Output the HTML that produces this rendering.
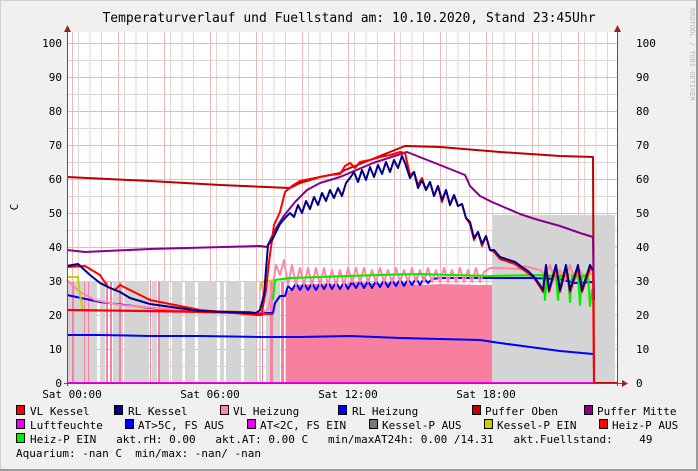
<!DOCTYPE html>
<html><head><meta charset="utf-8"><style>
body{margin:0;background:#f0f0f0;width:698px;height:471px;overflow:hidden}
svg{display:block}
text{font-family:"DejaVu Sans Mono","Liberation Mono",monospace}
</style></head><body>
<svg width="698" height="471" viewBox="0 0 698 471" xmlns="http://www.w3.org/2000/svg">
<rect x="0" y="0" width="698" height="471" fill="#f0f0f0"/>
<rect x="0.5" y="0.5" width="697" height="470" fill="none" stroke="#cfcfcf"/>
<line x1="0" y1="470" x2="698" y2="470" stroke="#9a9a9a" stroke-width="2"/>
<line x1="697" y1="0" x2="697" y2="471" stroke="#9a9a9a" stroke-width="2"/>
<text x="349" y="22" font-size="13" text-anchor="middle" fill="#000">Temperaturverlauf und Fuellstand am: 10.10.2020, Stand 23:45Uhr</text>
<text transform="translate(690,8) rotate(90)" font-size="7" fill="#bbb">RRDTOOL / TOBI OETIKER</text>
<rect x="67" y="32" width="550" height="351" fill="#fff"/>
<g stroke="#e0d4d4" stroke-width="1" id="minor">
<path d="M78.5 32V383M90 32V383M101.5 32V383M124.5 32V383M136 32V383M147.5 32V383M170.5 32V383M182 32V383M193.5 32V383M216.5 32V383M228 32V383M239.5 32V383M262.5 32V383M274 32V383M285.5 32V383M308.5 32V383M320 32V383M331.5 32V383M354.5 32V383M366 32V383M377.5 32V383M400.5 32V383M412 32V383M423.5 32V383M446.5 32V383M458 32V383M469.5 32V383M492.5 32V383M504 32V383M515.5 32V383M538.5 32V383M550 32V383M561.5 32V383M584.5 32V383M596 32V383M607.5 32V383"/>
<path d="M67 366.5H617M67 332.5H617M67 298.5H617M67 264.5H617M67 230.5H617M67 196.5H617M67 162.5H617M67 128.5H617M67 94.5H617M67 60.5H617"/>
</g>
<g stroke="#f0b4b4" stroke-width="1">
<path d="M72.5 32V383M118.5 32V383M164.5 32V383M210.5 32V383M256.5 32V383M302.5 32V383M348.5 32V383M394.5 32V383M440.5 32V383M486.5 32V383M532.5 32V383M578.5 32V383"/>
<path d="M67 349.5H617M67 315.5H617M67 281.5H617M67 247.5H617M67 213.5H617M67 179.5H617M67 145.5H617M67 111.5H617M67 77.5H617M67 43.5H617"/>
</g>
<!-- gray area Kessel-P AUS -->
<g fill="#d4d4d4">
<rect x="67" y="281" width="30" height="102"/>
<rect x="100" y="281" width="5" height="102"/>
<rect x="113" y="281" width="10" height="102"/>
<rect x="125" y="281" width="24" height="102"/>
<rect x="152" y="281" width="5" height="102"/>
<rect x="160" y="281" width="9" height="102"/>
<rect x="172" y="281" width="10" height="102"/>
<rect x="185" y="281" width="10" height="102"/>
<rect x="198" y="281" width="19" height="102"/>
<rect x="220" y="281" width="4" height="102"/>
<rect x="226" y="281" width="15" height="102"/>
<rect x="244" y="281" width="12" height="102"/>
<rect x="259" y="281" width="2" height="102"/>
<rect x="266" y="281" width="4" height="102"/>
<rect x="273" y="281" width="7" height="102"/>
<rect x="493" y="215" width="122" height="168"/>
</g>
<!-- pink area Heiz-P -->
<g fill="#f77f9f">
<rect x="72" y="282" width="2" height="101"/>
<rect x="84" y="282" width="1" height="101"/>
<rect x="88" y="282" width="1" height="101"/>
<rect x="106" y="282" width="2" height="101"/>
<rect x="110" y="282" width="2" height="101"/>
<rect x="119" y="282" width="2" height="101"/>
<rect x="150" y="282" width="1" height="101"/>
<rect x="158" y="282" width="2" height="101"/>
<rect x="262" y="282" width="1" height="101"/>
<rect x="270" y="282" width="3" height="101"/>
<rect x="281" y="282" width="3" height="101"/>
<polygon points="286,383 286,292 292,288 296,285 330,283 340,287 350,282 380,283 400,282 420,285 440,284 480,285 492,285 492,383"/>
</g>
<line x1="67" y1="383" x2="594" y2="383" stroke="#e0e" stroke-width="2"/>
<g fill="none" stroke-width="2" stroke-linejoin="round">
<!-- AT blue low -->
<polyline stroke="#00f" points="67,335 100,335 150,336 200,336 260,337 300,337 350,336 400,338 440,339 480,340 500,343 530,347 560,351 593,354"/>
<!-- Puffer Oben -->
<polyline stroke="#b00" points="67,177 150,181 220,185 290,188 300,183 320,177 340,173 345,170 370,160 390,152 405,146 440,147 500,152 560,156 593,157 594,383 617,383"/>
<!-- Puffer Mitte -->
<polyline stroke="#808" points="67,250 85,252 150,249 260,246 267,247 275,230 283,217 295,202 307,190 320,183 340,177 373,163 407,152 440,165 465,175 470,186 480,196 492,202 520,214 535,219 560,226 580,233 593,237 594,300"/>
<!-- RL Heizung -->
<polyline stroke="#00f" points="67,295 100,302 150,308 200,311 260,313 273,313 275,303 280,296 285,296 288,286 292,290 296,283 300,290 304,283 308,290 312,283 316,290 320,283 324,289 328,282 332,289 336,282 340,289 344,282 348,289 352,282 356,288 360,281 364,288 368,281 372,288 376,281 380,287 384,280 388,287 392,280 396,286 400,279 404,286 408,279 412,285 416,278 420,285 424,278 428,283 432,279 440,278 480,278 500,278 530,278 560,279 575,283 593,282"/>
<!-- VL Heizung -->
<polyline stroke="#f8a" points="67,280 80,292 95,300 120,305 180,310 260,313 268,310 272,290 276,265 280,275 284,260 288,285 292,265 296,285 300,268 304,285 308,268 312,285 316,268 320,285 324,268 328,285 332,270 336,285 340,270 344,285 348,268 352,282 356,268 360,282 364,268 368,282 372,270 376,282 380,268 384,282 388,270 392,282 396,268 400,282 404,270 408,282 412,268 416,282 420,270 424,282 428,268 432,282 436,270 440,282 444,268 448,282 452,270 456,282 460,268 464,282 468,270 472,282 476,268 480,282 484,272 490,268 500,268 520,269 525,266 532,268 540,270 545,275 550,265 555,280 560,270 565,280 570,265 575,280 580,270 585,280 590,272 593,268"/>
<!-- Kessel-P EIN yellow -->
<polyline stroke="#cc0" points="67,277 78,277 80,295 83,310"/>
<polyline stroke="#cc0" points="260,290 262,282 275,280 290,278 400,274 490,276 593,274"/>
<!-- Heiz-P EIN green -->
<polyline stroke="#0e0" points="273,300 275,280 290,278 380,275 420,274 490,276 543,275 545,300 547,276 556,276 558,300 560,276 568,276 570,302 572,276 578,276 580,305 582,276 588,276 590,306 592,290 593,300"/>
<!-- VL Kessel red -->
<polyline stroke="#f00" points="67,310 250,312 258,314 262,313 262,315 256,315 200,310 150,300 120,285 115,290 108,287 100,275 85,266 67,267" stroke-width="2"/>
<polyline stroke="#f00" points="67,310 200,312 270,314 273,314" />
<polyline stroke="#f00" points="262,312 266,290 269,262 274,225 280,212 285,192 292,186 300,181 315,178 330,175 340,174 345,166 350,163 355,168 360,162 370,160 380,157 390,155 400,152 405,153 410,175 414,172 418,185 422,178 426,190 430,182 434,196 438,186 442,202 446,190 450,205 454,195 458,206 462,204 466,218 470,224 474,240 478,232 482,246 486,236 490,250 494,252 500,259 515,264 522,269 528,273 534,278 540,287 543,292 546,268 549,292 556,268 560,292 566,268 570,292 578,268 582,292 590,268 593,270 594,383"/>
<!-- RL Kessel navy -->
<polyline stroke="#008" points="67,266 78,264 90,275 100,283 110,288 120,292 130,298 150,304 200,311 256,313 260,310 264,295 266,270 268,245 272,240 276,232 280,224 285,218 290,213 294,217 298,205 302,213 306,201 310,209 314,197 318,205 322,193 326,201 330,190 334,198 338,188 342,196 346,183 350,178 354,172 358,182 362,170 366,180 370,167 374,177 378,165 382,174 386,162 390,172 394,160 398,168 402,156 405,163 410,178 414,172 418,188 422,180 426,190 430,182 434,196 438,186 442,200 446,190 450,205 454,195 458,206 462,204 466,218 470,222 474,238 478,232 482,244 486,236 490,250 494,250 500,257 515,262 522,267 528,271 534,277 540,285 543,290 546,265 549,290 556,265 560,290 566,265 570,290 578,265 582,290 590,265 593,270"/>
</g>
<!-- axes -->
<line x1="67.5" y1="30" x2="67.5" y2="386" stroke="#555"/>
<line x1="617.5" y1="30" x2="617.5" y2="386" stroke="#555"/>
<line x1="64" y1="383.5" x2="622" y2="383.5" stroke="#555"/>
<polygon points="64,32 71,32 67.5,25" fill="#922"/>
<polygon points="614,32 621,32 617.5,25" fill="#922"/>
<polygon points="622,380 622,387 628,383.5" fill="#922"/>
<g font-size="11" fill="#000" text-anchor="end">
<text x="62" y="47">100</text><text x="62" y="81">90</text><text x="62" y="115">80</text><text x="62" y="149">70</text><text x="62" y="183">60</text><text x="62" y="217">50</text><text x="62" y="251">40</text><text x="62" y="285">30</text><text x="62" y="319">20</text><text x="62" y="353">10</text><text x="62" y="387">0</text>
</g>
<g font-size="11" fill="#000">
<text x="636" y="47">100</text><text x="636" y="81">90</text><text x="636" y="115">80</text><text x="636" y="149">70</text><text x="636" y="183">60</text><text x="636" y="217">50</text><text x="636" y="251">40</text><text x="636" y="285">30</text><text x="636" y="319">20</text><text x="636" y="353">10</text><text x="636" y="387">0</text>
</g>
<text transform="translate(18,207) rotate(-90)" font-size="11" text-anchor="middle">C</text>
<g font-size="11" text-anchor="middle">
<text x="72" y="398">Sat 00:00</text><text x="210" y="398">Sat 06:00</text><text x="348" y="398">Sat 12:00</text><text x="486" y="398">Sat 18:00</text>
</g>
<!-- legend -->
<g stroke="#000" stroke-width="1">
<rect x="16.5" y="405.5" width="8" height="9" fill="#f00"/>
<rect x="114.5" y="405.5" width="8" height="9" fill="#008"/>
<rect x="220.5" y="405.5" width="8" height="9" fill="#f8a"/>
<rect x="338.5" y="405.5" width="8" height="9" fill="#00f"/>
<rect x="472.5" y="405.5" width="8" height="9" fill="#b00"/>
<rect x="584.5" y="405.5" width="8" height="9" fill="#808"/>
<rect x="16.5" y="419.5" width="8" height="9" fill="#e0e"/>
<rect x="125.5" y="419.5" width="8" height="9" fill="#00f"/>
<rect x="247.5" y="419.5" width="8" height="9" fill="#e0e"/>
<rect x="369.5" y="419.5" width="8" height="9" fill="#777"/>
<rect x="484.5" y="419.5" width="8" height="9" fill="#cc0"/>
<rect x="599.5" y="419.5" width="8" height="9" fill="#f00"/>
<rect x="16.5" y="433.5" width="8" height="9" fill="#0e0"/>
</g>
<g font-size="11" fill="#000">
<text x="30" y="415">VL Kessel</text>
<text x="128" y="415">RL Kessel</text>
<text x="233" y="415">VL Heizung</text>
<text x="352" y="415">RL Heizung</text>
<text x="485" y="415">Puffer Oben</text>
<text x="597" y="415">Puffer Mitte</text>
<text x="30" y="429">Luftfeuchte</text>
<text x="138" y="429">AT&gt;5C, FS AUS</text>
<text x="260" y="429">AT&lt;2C, FS EIN</text>
<text x="382" y="429">Kessel-P AUS</text>
<text x="497" y="429">Kessel-P EIN</text>
<text x="612" y="429">Heiz-P AUS</text>
<text x="30" y="443" xml:space="preserve">Heiz-P EIN   akt.rH: 0.00   akt.AT: 0.00 C   min/maxAT24h: 0.00 /14.31   akt.Fuellstand:    49</text>
<text x="16" y="457" xml:space="preserve">Aquarium: -nan C  min/max: -nan/ -nan</text>
</g>
</svg>
</body></html>
